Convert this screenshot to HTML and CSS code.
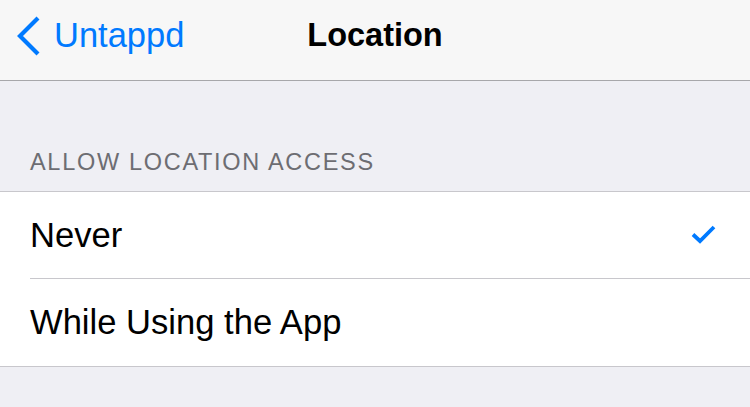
FILE: index.html
```html
<!DOCTYPE html>
<html lang="en">
  <head>
    <meta charset="UTF-8" />
    <meta name="viewport" content="width=device-width, initial-scale=1.0" />
    <title>Location</title>
    <link rel="stylesheet" href="styles.css">
  </head>
  <body>
    <div class="navbar">
      <a class="back" href="#">
        <svg class="chevron" width="26" height="40" viewBox="0 0 26 40">
          <polyline points="23,2 5,20 23,38" fill="none" stroke="#007aff" stroke-width="4.2" stroke-linecap="butt" stroke-linejoin="miter" />
        </svg>
        <span>Untappd</span>
      </a>
      <h1 class="title">Location</h1>
      <div></div>
    </div>

    <div class="section">
      <div class="section-header">ALLOW LOCATION ACCESS</div>
      <ul class="list">
        <li class="row">
          <div class="row-inner">
            <span>Never</span>
            <svg class="check" width="26" height="20" viewBox="0 0 26 20">
              <polyline points="2,9.5 9,16 23,2" fill="none" stroke="#007aff" stroke-width="3.8" />
            </svg>
          </div>
        </li>
        <li class="row">
          <div class="row-inner">
            <span>While Using the App</span>
          </div>
        </li>
      </ul>
    </div>
  </body>
</html>
```

FILE: styles.css
```css
body {
  font-family: "Liberation Sans", Arial, sans-serif;
  margin: 0;
  padding: 0;
  background-color: #efeff4;
  color: #000;
}
.navbar {
  display: grid;
  grid-template-columns: 1fr auto 1fr;
  align-items: center;
  height: 71px;
  padding-bottom: 9px;
  background-color: #f7f7f7;
  border-bottom: 1px solid #a7a7aa;
}
.back {
  display: flex;
  align-items: center;
  gap: 13px;
  padding-left: 15px;
  color: #007aff;
  text-decoration: none;
  font-size: 34.5px;
}
.chevron {
  display: block;
}
.title {
  margin: 0;
  font-size: 32.5px;
  font-weight: bold;
}
.section {
  padding-top: 69px;
}
.section-header {
  padding: 0 30px;
  height: 24px;
  line-height: 24px;
  font-size: 23.5px;
  letter-spacing: 1.7px;
  color: #6d6d72;
  margin-bottom: 17px;
}
.list {
  list-style: none;
  margin: 0;
  padding: 0;
  background-color: #fff;
  border-top: 1px solid #c8c7cc;
  border-bottom: 1px solid #c8c7cc;
}
.row {
  padding-left: 30px;
}
.row-inner {
  display: flex;
  align-items: center;
  justify-content: space-between;
  height: 86px;
  padding-right: 33px;
  font-size: 34.6px;
  border-bottom: 1px solid #c8c7cc;
}
.row:last-child .row-inner {
  border-bottom: none;
  height: 87px;
}
.check {
  display: block;
}
```
